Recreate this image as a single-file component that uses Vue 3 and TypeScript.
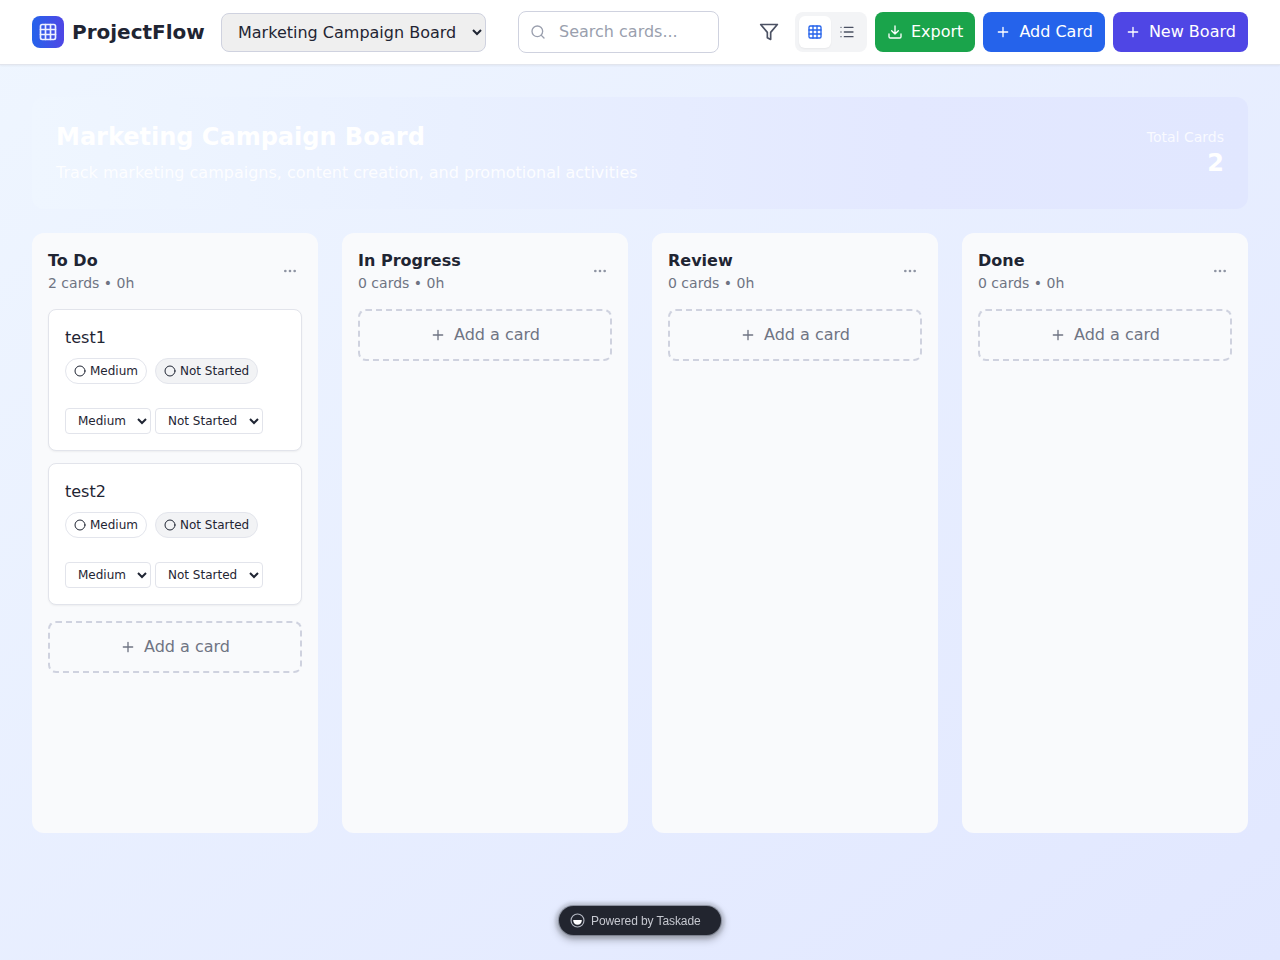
<script setup lang="ts">
import { ref } from 'vue'

interface Card {
  title: string
  priority: string
  status: string
}
interface Column {
  name: string
  cards: Card[]
}

const board = ref('Marketing Campaign Board')
const query = ref('')
const priorities = ['Low', 'Medium', 'High']
const statuses = ['Not Started', 'Working', 'Done']
const columns = ref<Column[]>([
  {
    name: 'To Do',
    cards: [
      { title: 'test1', priority: 'Medium', status: 'Not Started' },
      { title: 'test2', priority: 'Medium', status: 'Not Started' },
    ],
  },
  { name: 'In Progress', cards: [] },
  { name: 'Review', cards: [] },
  { name: 'Done', cards: [] },
])
</script>

<template>
  <div class="page">
    <header class="topbar">
      <div class="brand">
        <div class="logo">
          <svg class="icon i20" viewBox="0 0 24 24"><rect x="3" y="3" width="18" height="18" rx="2" /><path d="M3 9h18M3 15h18M9 3v18M15 3v18" /></svg>
        </div>
        <span class="brand-name">ProjectFlow</span>
      </div>
      <select v-model="board" class="board-select">
        <option>Marketing Campaign Board</option>
      </select>
      <div class="search">
        <svg class="icon i16" viewBox="0 0 24 24"><circle cx="11" cy="11" r="8" /><path d="m21 21-4.3-4.3" /></svg>
        <input v-model="query" placeholder="Search cards..." />
      </div>
      <div class="actions">
        <button class="filter">
          <svg class="icon i20" viewBox="0 0 24 24"><path d="M22 3H2l8 9.46V19l4 2v-8.54z" /></svg>
        </button>
        <div class="toggle">
          <button class="view on">
            <svg class="icon i16" viewBox="0 0 24 24"><rect x="3" y="3" width="18" height="18" rx="2" /><path d="M3 9h18M3 15h18M9 3v18M15 3v18" /></svg>
          </button>
          <button class="view">
            <svg class="icon i16" viewBox="0 0 24 24"><path d="M3 5h.01M3 12h.01M3 19h.01M8 5h13M8 12h13M8 19h13" /></svg>
          </button>
        </div>
        <button class="btn green">
          <svg class="icon i16" viewBox="0 0 24 24"><path d="M12 15V3M21 15v4a2 2 0 0 1-2 2H5a2 2 0 0 1-2-2v-4M7 10l5 5 5-5" /></svg>
          <span>Export</span>
        </button>
        <button class="btn blue">
          <svg class="icon i16" viewBox="0 0 24 24"><path d="M5 12h14M12 5v14" /></svg>
          <span>Add Card</span>
        </button>
        <button class="btn indigo">
          <svg class="icon i16" viewBox="0 0 24 24"><path d="M5 12h14M12 5v14" /></svg>
          <span>New Board</span>
        </button>
      </div>
    </header>

    <main>
      <section class="banner">
        <div>
          <h1>{{ board }}</h1>
          <p>Track marketing campaigns, content creation, and promotional activities</p>
        </div>
        <div class="total">
          <div class="total-label">Total Cards</div>
          <div class="total-value">2</div>
        </div>
      </section>

      <section class="columns">
        <article v-for="col in columns" :key="col.name" class="column">
          <div class="col-head">
            <div>
              <h2>{{ col.name }}</h2>
              <div class="meta">{{ col.cards.length }} cards • 0h</div>
            </div>
            <button class="more">
              <svg class="icon i16" viewBox="0 0 24 24"><circle cx="12" cy="12" r="1" /><circle cx="19" cy="12" r="1" /><circle cx="5" cy="12" r="1" /></svg>
            </button>
          </div>
          <div v-if="col.cards.length" class="cards">
            <div v-for="card in col.cards" :key="card.title" class="card">
              <div class="card-title">{{ card.title }}</div>
              <div class="badges">
                <span class="badge"><svg class="icon i12" viewBox="0 0 24 24"><circle cx="12" cy="12" r="10" /></svg>{{ card.priority }}</span>
                <span class="badge gray"><svg class="icon i12" viewBox="0 0 24 24"><circle cx="12" cy="12" r="10" /></svg>{{ card.status }}</span>
              </div>
              <div class="selects">
                <select v-model="card.priority" class="s-priority">
                  <option v-for="p in priorities" :key="p">{{ p }}</option>
                </select>
                <select v-model="card.status" class="s-status">
                  <option v-for="s in statuses" :key="s">{{ s }}</option>
                </select>
              </div>
            </div>
          </div>
          <button class="add">
            <svg class="icon i16" viewBox="0 0 24 24"><path d="M5 12h14M12 5v14" /></svg>
            <span>Add a card</span>
          </button>
        </article>
      </section>
    </main>

    <a class="powered">
      <svg class="mark" viewBox="0 0 16 16"><circle cx="8" cy="8" r="6.9" fill="none" stroke="#b3b7c2" stroke-width="1.2" /><path d="M3.4 7.4h9.2c0 3-1.8 5.2-4.600 5.200S3.400 10.400 3.400 7.400z" fill="#fff" /></svg>
      <span class="powered-text">Powered by Taskade</span>
    </a>
  </div>
</template>

<style>
body {
  margin: 0;
  overflow: hidden;
}
</style>

<style scoped>
* {
  box-sizing: border-box;
}
.page {
  height: 960px;
  font: 16px/24px 'DejaVu Sans', sans-serif;
  color: #1f2533;
  background: linear-gradient(to bottom right, #eff6ff, #e1e7ff);
}
button,
select,
input {
  font: inherit;
  color: inherit;
  margin: 0;
}
button {
  border: 0;
  background: none;
  padding: 0;
  display: flex;
  align-items: center;
  justify-content: center;
}
.icon {
  display: block;
  flex: none;
  fill: none;
  stroke: currentColor;
  stroke-width: 2;
  stroke-linecap: round;
  stroke-linejoin: round;
}
.i20 { width: 20px; height: 20px; }
.i16 { width: 16px; height: 16px; }
.i12 { width: 12px; height: 12px; }

.topbar {
  height: 65px;
  padding: 0 32px;
  display: flex;
  align-items: center;
  background: #fff;
  border-bottom: 1px solid #e2e5ed;
  box-shadow: 0 1px 2px rgba(0, 0, 0, 0.05);
}
.brand {
  display: flex;
  align-items: center;
  gap: 8px;
  width: 173px;
  margin-right: 16px;
}
.logo {
  width: 32px;
  height: 32px;
  border-radius: 8px;
  display: grid;
  place-items: center;
  color: #eef1ff;
  background: linear-gradient(to right, #2563eb, #4f46e5);
}
.brand-name {
  font-size: 20px;
  line-height: 28px;
  font-weight: 700;
}
.board-select {
  width: 265px;
  height: 39px;
  padding: 0 0 0 12px;
  border: 1px solid #cfd2df;
  border-radius: 8px;
  background-color: #efefef;
}
.search {
  width: 201px;
  height: 42px;
  margin: 0 32px;
  padding: 0 12px;
  display: flex;
  align-items: center;
  gap: 13px;
  border: 1px solid #cfd2df;
  border-radius: 8px;
  color: #9a9fae;
}
.search svg {
  margin-left: -1px;
}
.search input {
  flex: 1;
  min-width: 0;
  border: 0;
  padding: 0;
  outline: 0;
  background: transparent;
}
.search input::placeholder {
  color: #9a9fae;
  opacity: 1;
}
.actions {
  display: flex;
  align-items: center;
  gap: 8px;
}
.filter {
  width: 36px;
  height: 36px;
  color: #4b5163;
}
.toggle {
  display: flex;
  padding: 4px;
  border-radius: 8px;
  background: #f3f4f6;
}
.view {
  width: 32px;
  height: 32px;
  border-radius: 6px;
  color: #4b5163;
}
.view.on {
  background: #fff;
  color: #2563eb;
  box-shadow: 0 1px 2px rgba(0, 0, 0, 0.05);
}
.btn {
  height: 40px;
  padding: 0 12px;
  gap: 8px;
  border-radius: 8px;
  color: #fff;
  white-space: nowrap;
}
.green { background: #1aa44b; }
.blue { background: #2563eb; }
.indigo { background: #4f46e5; }

main {
  padding: 32px;
}
.banner {
  height: 112px;
  padding: 24px;
  margin-bottom: 24px;
  display: flex;
  align-items: center;
  justify-content: space-between;
  border-radius: 12px;
  color: #fff;
  background: linear-gradient(to right, #eff6ff, #e9f0ff 35%, #e3e8ff 72%, #e1e7ff);
}
h1 {
  margin: 0 0 8px;
  font-size: 24px;
  line-height: 32px;
  font-weight: 700;
}
p {
  margin: 0;
  opacity: 0.9;
}
.total {
  text-align: right;
}
.total-label {
  font-size: 14px;
  line-height: 20px;
  opacity: 0.8;
}
.total-value {
  font-size: 24px;
  line-height: 32px;
  font-weight: 700;
}
.columns {
  display: grid;
  grid-template-columns: repeat(4, 1fr);
  gap: 24px;
}
.column {
  height: 600px;
  padding: 16px;
  border-radius: 12px;
  background: #f9fafc;
}
.col-head {
  display: flex;
  align-items: center;
  justify-content: space-between;
  margin-bottom: 16px;
}
h2 {
  margin: 0;
  font-size: 16px;
  line-height: 24px;
  font-weight: 700;
}
.meta {
  font-size: 14px;
  line-height: 20px;
  color: #6f7483;
}
.more {
  padding: 4px;
  color: #8f94a3;
}
.cards {
  display: flex;
  flex-direction: column;
  gap: 12px;
  margin-bottom: 16px;
}
.card {
  padding: 16px;
  border: 1px solid #e2e4eb;
  border-radius: 8px;
  background: #fff;
  box-shadow: 0 1px 2px rgba(0, 0, 0, 0.05);
}
.card-title {
  margin-bottom: 8px;
}
.badges {
  display: flex;
  gap: 8px;
  margin-bottom: 24px;
}
.badge {
  display: flex;
  align-items: center;
  gap: 4px;
  padding: 4px 8px;
  border: 1px solid #e3e5ec;
  border-radius: 13px;
  font-size: 12px;
  line-height: 16px;
}
.badge.gray {
  background: #f2f3f5;
}
.selects {
  display: flex;
  gap: 4px;
}
.selects select {
  height: 26px;
  padding: 0 0 0 8px;
  border: 1px solid #e2e4eb;
  border-radius: 4px;
  background-color: #fff;
  font-size: 12px;
}
.selects .s-priority { width: 86px; }
.selects .s-status { width: 108px; }
.add {
  width: 100%;
  height: 52px;
  gap: 8px;
  border: 2px dashed #cfd2df;
  border-radius: 8px;
  color: #6f7483;
}
.powered {
  position: fixed;
  left: 559px;
  top: 906px;
  width: 162px;
  height: 29px;
  padding-left: 11px;
  display: flex;
  align-items: center;
  gap: 6px;
  border-radius: 15px;
  background: #22252f;
  color: #c6c8d0;
  font: 12px/16px 'Liberation Sans', sans-serif;
  box-shadow: 0 0 0 1px rgba(90, 95, 110, 0.5), 0 0 3px 4px rgba(120, 122, 130, 0.22), 0 3px 8px 1px rgba(0, 0, 0, 0.34);
}
.powered-text {
  letter-spacing: -0.09px;
}
.mark {
  width: 15px;
  height: 15px;
}
</style>
